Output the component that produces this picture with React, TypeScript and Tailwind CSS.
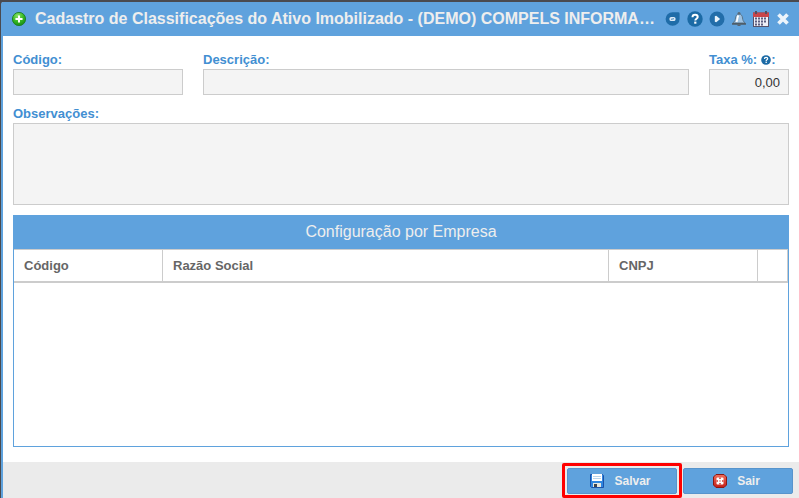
import type { ReactNode } from 'react'

const columns = [
  { label: 'Código', width: 'w-[149px]' },
  { label: 'Razão Social', width: '' },
  { label: 'CNPJ', width: 'w-[149px]' },
  { label: '', width: 'w-[30px]' },
]

const inputClass =
  'block w-full border border-[#cccccc] bg-[#f4f4f4] px-2 text-[13px] text-[#333333] outline-none'

function AddIcon() {
  return (
    <svg viewBox="0 0 16 16" className="h-4 w-4 shrink-0" aria-hidden="true">
      <defs>
        <radialGradient id="add" cx="0.4" cy="0.25" r="0.8">
          <stop offset="0" stopColor="#8be368" />
          <stop offset="0.55" stopColor="#35b822" />
          <stop offset="1" stopColor="#168a12" />
        </radialGradient>
      </defs>
      <circle cx="8" cy="8" r="6.6" fill="url(#add)" stroke="#1b7d22" strokeWidth="0.9" />
      <path d="M8 5.2v5.6M5.2 8h5.6" stroke="#fff" strokeWidth="2" strokeLinecap="round" />
    </svg>
  )
}

function MinimizeIcon() {
  return (
    <svg viewBox="0 0 16 16" className="h-4 w-4" aria-hidden="true">
      <path d="M7.5 1.3h5.7a1.4 1.4 0 0 1 1.4 1.4V8a7 6.7 0 1 1-7.1-6.7z" fill="#1f6ca8" />
      <rect x="4.5" y="6" width="6" height="4" rx="1.6" fill="#dceaf6" />
      <path d="M6 8.3l3-.6" stroke="#1f6ca8" strokeWidth="0.8" />
    </svg>
  )
}

function HelpIcon({ className }: { className: string }) {
  return (
    <svg viewBox="0 0 16 16" className={className} aria-hidden="true">
      <circle cx="8" cy="8" r="7.7" fill="#1b6aa5" />
      <path
        d="M5.5 6.2c0-1.6 1.1-2.4 2.6-2.4s2.6.8 2.6 2.2c0 1.7-2.4 1.7-2.4 3.4"
        fill="none"
        stroke="#fff"
        strokeWidth="2"
      />
      <rect x="7.2" y="10.6" width="2.2" height="2.1" fill="#fff" />
    </svg>
  )
}

function PlayIcon() {
  return (
    <svg viewBox="0 0 16 16" className="h-4 w-4" aria-hidden="true">
      <circle cx="8" cy="8" r="7.5" fill="#226da9" />
      <path d="M5.8 5.2l1.4-.4 4 3.2-4 3.2-1.4-.4z" fill="#eaf3fb" />
    </svg>
  )
}

function BellIcon() {
  return (
    <svg viewBox="0 0 16 16" className="h-4 w-4" aria-hidden="true">
      <circle cx="8" cy="2.4" r="1.5" fill="#5a6670" />
      <path
        d="M8 3.2C5.6 3.2 4.7 4.800 4.500 7c-.2 2.200-.8 3.600-2.700 5h12.400c-1.900-1.400-2.500-2.800-2.700-5-.2-2.200-1.100-3.800-3.500-3.800z"
        fill="#9fc3e2"
        stroke="#59758c"
        strokeWidth="1"
      />
      <path d="M7.5 4.500C6.300 5.500 6.600 8.500 5.500 11" stroke="#fff" strokeWidth="1.800" fill="none" />
      <rect x="1" y="12" width="14" height="1.8" rx="0.6" fill="#4f5d68" />
      <rect x="6.500" y="13.500" width="3" height="1.500" fill="#56636e" />
    </svg>
  )
}

function CalendarIcon() {
  return (
    <svg viewBox="0 0 16 16" className="h-4 w-4" aria-hidden="true">
      <rect x="0.5" y="2" width="15" height="13.5" fill="#eeeff7" stroke="#57536b" />
      <rect x="0" y="1.5" width="16" height="4.5" fill="#c9454a" />
      <path d="M3 0v3M13 0v3" stroke="#554e60" strokeWidth="2" />
      <path
        d="M2 7.5h12M2 10.5h12M2 13.500h9"
        stroke="#5b5d80"
        strokeWidth="2"
        strokeDasharray="2 1"
      />
    </svg>
  )
}

function CloseIcon() {
  return (
    <svg viewBox="0 0 16 16" className="h-4 w-4" aria-hidden="true">
      <path d="M3.5 3.5l9 9M12.5 3.5l-9 9" stroke="#ecf4fb" strokeWidth="3.7" />
    </svg>
  )
}

function SaveIcon() {
  return (
    <svg viewBox="0 0 16 16" className="h-4 w-4" aria-hidden="true">
      <path d="M1.5 1.5h12l1 1v12h-12l-1-1z" fill="#2f86e0" stroke="#1a52a8" />
      <rect x="3" y="1" width="10" height="7" fill="#fff" />
      <path d="M4 3.500h8M4 5.500h8" stroke="#b9d5ec" />
      <rect x="4" y="10" width="8" height="4" fill="#e8e8e0" />
      <rect x="5" y="11" width="3" height="3" fill="#3b4450" />
    </svg>
  )
}

function ExitIcon() {
  return (
    <svg viewBox="0 0 16 16" className="h-4 w-4" aria-hidden="true">
      <defs>
        <linearGradient id="exit" x1="0" y1="0" x2="0" y2="1">
          <stop offset="0" stopColor="#f0705c" />
          <stop offset="1" stopColor="#c41d16" />
        </linearGradient>
      </defs>
      <path
        d="M4 1.5h8L14.500 4v8L12 14.500H4L1.500 12V4z"
        fill="url(#exit)"
        stroke="#8c1712"
        strokeLinejoin="round"
      />
      <rect x="4.500" y="4.500" width="7" height="7" rx="1" fill="#fff" />
      <path d="M8 4.500v1.500M8 10v1.500M4.500 8H6M10 8h1.500" stroke="#d23a2e" strokeWidth="1.500" />
      <path d="M7 7l2 2M9 7l-2 2" stroke="#e07a70" strokeWidth="0.500" />
    </svg>
  )
}

const actions = [
  { label: 'Minimizar', icon: <MinimizeIcon /> },
  { label: 'Ajuda', icon: <HelpIcon className="h-4 w-4" /> },
  { label: 'Iniciar', icon: <PlayIcon /> },
  { label: 'Notificações', icon: <BellIcon /> },
  { label: 'Calendário', icon: <CalendarIcon /> },
  { label: 'Fechar', icon: <CloseIcon /> },
]

function FooterButton({ icon, children }: { icon: ReactNode; children: ReactNode }) {
  return (
    <button
      type="button"
      className="flex h-[26px] w-[110px] items-center justify-center gap-[9px] rounded-xs border border-[#5794cc] bg-[#5fa2dd] pr-1 text-xs font-bold text-[#eeeeee]"
    >
      {icon}
      {children}
    </button>
  )
}

export default function App() {
  return (
    <div className="flex min-h-screen flex-col bg-[#4a4a4f] pt-0.5 pl-px font-['Liberation_Sans',Arial,sans-serif]">
      <div className="flex grow flex-col rounded-tl-xs border-l-2 border-[#5fa2dd] bg-white">
        <header className="flex h-[34px] items-center bg-[#5fa2dd] px-2">
          <AddIcon />
          <h1 className="ml-2 min-w-0 grow truncate text-base font-bold text-[#eeeeee]">
            Cadastro de Classificações do Ativo Imobilizado - (DEMO) COMPELS INFORMA…
          </h1>
          <div className="flex shrink-0 gap-1.5">
            {actions.map((action) => (
              <button key={action.label} type="button" aria-label={action.label}>
                {action.icon}
              </button>
            ))}
          </div>
        </header>

        <form id="cadastro" className="flex grow flex-col px-2.5 pt-4 pb-[15px]">
          <div className="flex gap-5 text-[13px] leading-4 font-bold text-[#428fd2]">
            <div className="w-[170px]">
              <label htmlFor="codigo">Código:</label>
              <input id="codigo" type="text" className={`${inputClass} mt-px h-[26px]`} />
            </div>
            <div className="min-w-0 grow">
              <label htmlFor="descricao">Descrição:</label>
              <input id="descricao" type="text" className={`${inputClass} mt-px h-[26px]`} />
            </div>
            <div className="w-20">
              <label htmlFor="taxa" className="flex items-center whitespace-nowrap">
                Taxa %:
                <HelpIcon className="ml-1 h-2.5 w-2.5" />:
              </label>
              <input
                id="taxa"
                type="text"
                defaultValue="0,00"
                className={`${inputClass} mt-px h-[26px] text-right font-normal`}
              />
            </div>
          </div>

          <label htmlFor="observacoes" className="mt-[11px] text-[13px] leading-4 font-bold text-[#428fd2]">
            Observações:
          </label>
          <textarea id="observacoes" className={`${inputClass} mt-px h-[82px] resize-none py-1`} />

          <section className="mt-2.5 flex grow flex-col border border-t-0 border-[#5fa2dd]">
            <h2 className="-mx-px bg-[#5fa2dd] text-center text-base leading-[34px] text-[#eeeeee]">
              Configuração por Empresa
            </h2>
            <table className="w-full table-fixed border-separate border-spacing-0">
              <thead>
                <tr>
                  {columns.map((column) => (
                    <th
                      key={column.label}
                      scope="col"
                      className={`h-[34px] border-t border-r border-b-2 border-[#cccccc] px-2.5 text-left text-[13px] leading-4 font-bold text-[#666666] ${column.width}`}
                    >
                      {column.label}
                    </th>
                  ))}
                </tr>
              </thead>
            </table>
          </section>
        </form>

        <footer className="flex justify-end gap-1.5 bg-[#ebebeb] px-1.5 pt-1.5 pb-1">
          <div className="relative">
            <FooterButton icon={<SaveIcon />}>Salvar</FooterButton>
            <div className="pointer-events-none absolute -inset-x-[5px] -top-[5px] -bottom-1 rounded-xs border-3 border-[#ff0000]" />
          </div>
          <FooterButton icon={<ExitIcon />}>Sair</FooterButton>
        </footer>
      </div>
    </div>
  )
}
